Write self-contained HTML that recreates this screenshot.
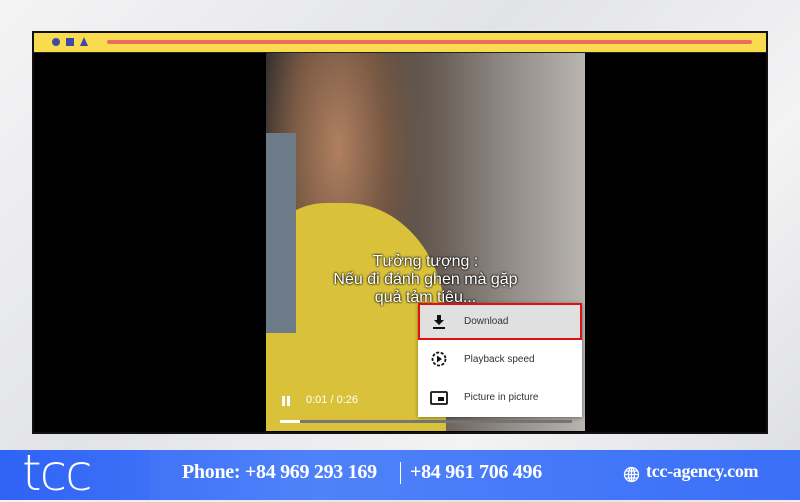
<!DOCTYPE html>
<html><head><meta charset="utf-8"><style>
*{margin:0;padding:0;box-sizing:border-box}
body{width:800px;height:500px;overflow:hidden;position:relative;font-family:"Liberation Sans",sans-serif;background:linear-gradient(135deg,#f4f4f5,#e2e3e6 40%,#f3f3f4 70%,#dcdde0)}
.frame{position:absolute;left:32px;top:31px;width:736px;height:403px;border:2px solid #111;background:#000}
.bar{position:absolute;left:-2px;top:-2px;width:736px;height:22px;background:#f9db4f;border:2px solid #111;border-bottom:1px solid #222}
.video{position:absolute;left:232px;top:20px;width:319px;height:378px;overflow:hidden;
background:linear-gradient(90deg,#2a2a2a 0%,#4a4038 30%,#6a6058 55%,#908a85 75%,#b8b4b0 100%)}
.abs{position:absolute}
.menu{position:absolute;left:384px;top:270px;width:164px;height:114px;background:#fff;box-shadow:0 1px 4px rgba(0,0,0,.4)}
.row{position:absolute;left:0;width:164px;height:37px;font-size:10px;color:#333;line-height:37px;padding-left:46px}
.foot{position:absolute;left:0;top:450px;width:800px;height:50px;background:linear-gradient(90deg,#3467f5,#4f82f9 40%,#3a6ff7)}
.ft{position:absolute;color:#fff;font-family:"Liberation Serif",serif;font-weight:bold;font-size:20px;top:11px;letter-spacing:-0.3px}
</style></head><body>
<div class="frame">
 <div class="bar">
  <div class="abs" style="left:18px;top:5px;width:8px;height:8px;border-radius:50%;background:#3f4aa7"></div>
  <div class="abs" style="left:32px;top:5px;width:8px;height:8px;background:#3f4aa7"></div>
  <div class="abs" style="left:46px;top:4px;width:0;height:0;border-left:4.5px solid transparent;border-right:4.5px solid transparent;border-bottom:9px solid #3f4aa7"></div>
  <div class="abs" style="left:73px;top:7px;width:645px;height:4px;border-radius:2px;background:#f06a5e"></div>
 </div>
 <div class="video">
  <div class="abs" style="left:0;top:0;width:180px;height:378px;background:radial-gradient(ellipse at 40% 25%,#b08060 0%,#7a5a45 30%,transparent 55%)"></div>
  <div class="abs" style="left:-20px;top:150px;width:200px;height:240px;border-radius:40% 50% 0 0;background:#d9c23a"></div>
  <div class="abs" style="left:0;top:80px;width:30px;height:200px;background:#6d7a88"></div>
  <div class="abs" style="left:0;top:200px;width:319px;text-align:center;color:#fff;font-size:16px;line-height:18px;text-shadow:0 0 2px #000,0 0 2px #000">Tưởng tượng :<br>Nếu đi đánh ghen mà gặp<br>quả tảm tiêu...</div>
  <div class="abs" style="left:16px;top:343px;width:3px;height:10px;background:#fff"></div>
  <div class="abs" style="left:21px;top:343px;width:3px;height:10px;background:#fff"></div>
  <div class="abs" style="left:40px;top:341px;color:#fff;font-size:11px">0:01 / 0:26</div>
  <div class="abs" style="left:14px;top:367px;width:292px;height:3px;background:#777"></div>
  <div class="abs" style="left:14px;top:367px;width:20px;height:3px;background:#fff"></div>
 </div>
 <div class="menu">
  <div class="row" style="top:0;background:#e0e0e0;border:2px solid #e01010;line-height:33px;padding-left:44px">Download</div>
  <svg class="abs" style="left:14px;top:12px" width="14" height="14"><path d="M5 0h4v5h3L7 10 2 5h3z M1 12h12v2H1z" fill="#111"/></svg>
  <div class="row" style="top:38px">Playback speed</div>
  <svg class="abs" style="left:13px;top:48px" width="16" height="16"><circle cx="8" cy="8" r="6.5" fill="none" stroke="#111" stroke-width="1.8" stroke-dasharray="3 1.6"/><path d="M6 4.5v7l5-3.5z" fill="#111"/></svg>
  <div class="row" style="top:76px">Picture in picture</div>
  <svg class="abs" style="left:12px;top:88px" width="18" height="14"><rect x="1" y="1" width="16" height="12" rx="1" fill="none" stroke="#111" stroke-width="1.8"/><rect x="8" y="6" width="6" height="4" fill="#111"/></svg>
 </div>
</div>
<div class="foot">
 <div class="abs" style="left:0;top:0;width:150px;height:50px;background:linear-gradient(90deg,#2f63f5,#3d70f7)"></div>
 <div class="abs" style="left:22px;top:-6px;color:#fff;font-size:50px;font-family:'DejaVu Sans',sans-serif;font-weight:300;letter-spacing:-2px">tcc</div>
 <div class="ft" style="left:182px">Phone: +84 969 293 169</div>
 <div class="abs" style="left:400px;top:12px;width:1px;height:22px;background:#fff"></div>
 <div class="ft" style="left:410px">+84 961 706 496</div>
 <svg class="abs" style="left:623px;top:16px" width="17" height="17"><g fill="none" stroke="#fff" stroke-width="1.3"><circle cx="8.5" cy="8.5" r="7"/><ellipse cx="8.5" cy="8.5" rx="3" ry="7"/><path d="M1.5 8.5h14M2.5 5h12M2.5 12h12M8.5 1.5v14"/></g></svg>
 <div class="ft" style="left:646px;font-size:18px">tcc-agency.com</div>
</div>
</body></html>
